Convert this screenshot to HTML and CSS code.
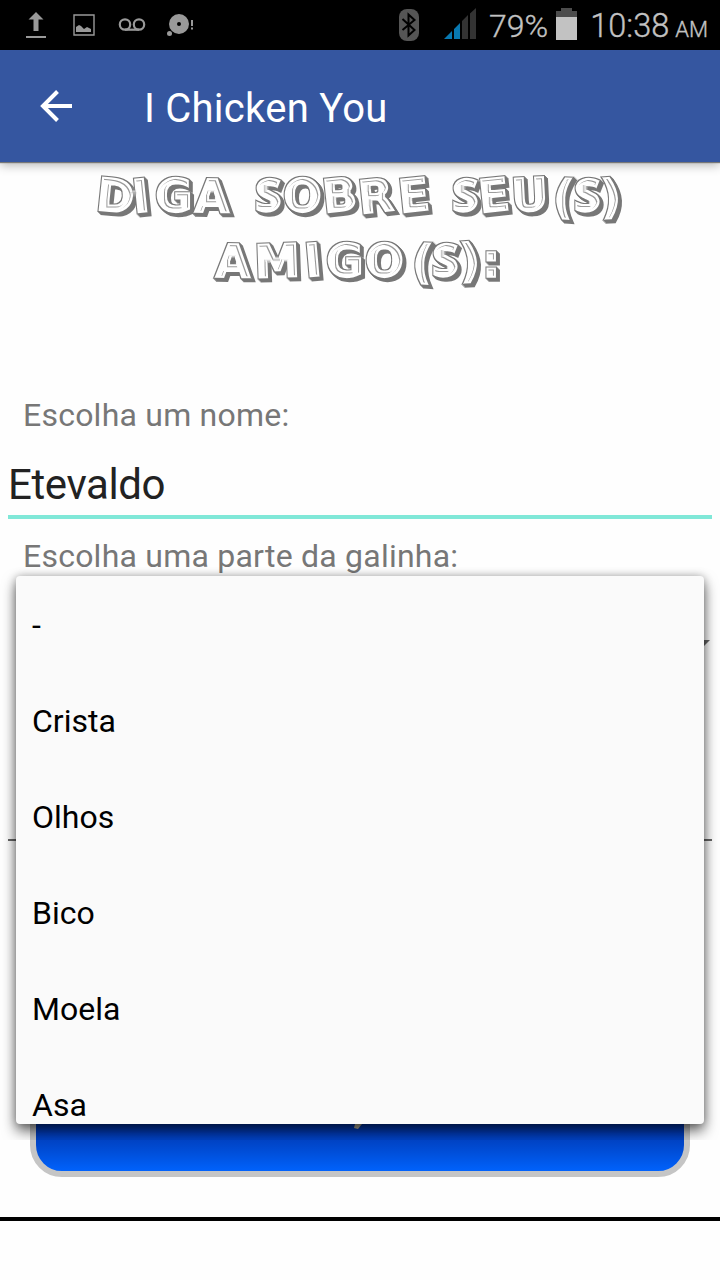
FILE: index.html
```
<!DOCTYPE html>
<html lang="pt-BR">
<head>
<meta charset="utf-8">
<meta name="viewport" content="width=720">
<title>I Chicken You</title>
<link rel="stylesheet" href="styles.css">
</head>
<body>
<div class="screen">
  <header class="status">
    <div class="notices">
      <svg class="upload" width="20" height="28" viewBox="0 0 20 28" fill="#999"><path d="M10 1l7.500 7.500h-5V20h-5V8.500h-5zM0 25h20v2H0z"/></svg>
      <svg class="picture" width="22" height="22" viewBox="0 0 22 22"><path d="M1 1h20v20H1z" fill="none" stroke="#999" stroke-width="1.400"/><path d="M3 18v-5l3-2 2 1 3 3 3-2 2 1 2 1v3z" fill="#999"/></svg>
      <svg class="voicemail" width="28" height="14" viewBox="0 0 28 14" fill="none" stroke="#999" stroke-width="2.200"><circle cx="7" cy="6.500" r="5.200"/><circle cx="21" cy="6.500" r="5.200"/><path d="M7 11.700h14"/></svg>
      <svg class="disc" width="28" height="24" viewBox="0 0 28 24" fill="#999"><path fill-rule="evenodd" d="M12 1a10 10 0 1 1 0 20 10 10 0 0 1 0-20zm0 8a2 2 0 1 0 0 4 2 2 0 0 0 0-4z"/><circle cx="2.500" cy="20.500" r="2.500"/><path d="M24 7h2v6h-2zM24 14.500h2v2h-2z"/></svg>
    </div>
    <div class="system">
      <svg class="bluetooth" width="22" height="34" viewBox="0 0 22 34"><rect x="1" y="1" width="20" height="32" rx="8" fill="#555"/><path d="M4.500 11l12 11-6 5.500V6.500l6 5.500-12 10" fill="none" stroke="#000" stroke-width="2"/></svg>
      <svg class="signal" width="32" height="32" viewBox="0 0 32 32"><path d="M0 31l8-8v8zM10 21l6-6v16h-6z" fill="#0878b0"/><path d="M18 13l6-6v24h-6zM26 5.500l6-5.500v31h-6z" fill="#333"/></svg>
      <span class="percent">79%</span>
      <svg class="battery" width="21" height="32" viewBox="0 0 21 32"><path d="M0 3h5V0h11v3h5v6H0z" fill="#4c4c4c"/><path d="M0 9h21v23H0z" fill="#c2c2c2"/></svg>
      <span class="clock">10:38</span><span class="meridiem">AM</span>
    </div>
  </header>
  <nav class="appbar">
    <svg class="back" width="32" height="32" viewBox="0 0 32 32" fill="none" stroke="#fff" stroke-width="4"><path d="M32 16H4M17.500 1.500L3 16l14.500 14.500"/></svg>
    <h1 class="title">I Chicken You</h1>
  </nav>
  <main class="content">
    <svg class="heading" width="720" height="140" viewBox="0 0 720 140">
      <defs>
        <filter id="carved" x="0" y="0" width="720" height="140" filterUnits="userSpaceOnUse" color-interpolation-filters="sRGB">
          <feFlood flood-color="#777" result="ink"/>
          <feFlood flood-color="#777" flood-opacity=".75" result="softInk"/>
          <feFlood flood-color="#fff" result="paper"/>
          <feMorphology in="SourceAlpha" operator="erode" radius="1" result="body"/>
          <feOffset in="SourceAlpha" dx="1" dy="1" result="s1"/>
          <feOffset in="SourceAlpha" dx="2" dy="2" result="s2"/>
          <feOffset in="SourceAlpha" dx="3" dy="3" result="s3"/>
          <feMerge result="solid"><feMergeNode in="s3"/><feMergeNode in="s2"/><feMergeNode in="s1"/><feMergeNode in="SourceAlpha"/></feMerge>
          <feComposite in="ink" in2="solid" operator="in" result="depth"/>
          <feComposite in="paper" in2="body" operator="in" result="face"/>
          <feMorphology in="SourceAlpha" operator="erode" radius="3" result="inner"/>
          <feOffset in="inner" dx="-1" dy="1" result="moved"/>
          <feComposite in="inner" in2="moved" operator="out" result="edge"/>
          <feComposite in="softInk" in2="edge" operator="in" result="line"/>
          <feMerge><feMergeNode in="depth"/><feMergeNode in="face"/><feMergeNode in="line"/></feMerge>
        </filter>
      </defs>
      <g filter="url(#carved)" class="carved">
        <text y="48 51 50 50 50 50 50 51 52 51 50 50 51 50 50 50 51" x="95 134 155 194 236 255 283 324 360 400 434 452 480 512 552 574 601" rotate="6 -6 0 1 0 0 0 -6 -6 -6 0 0 -6 -3 4 0 -3">DIGA <tspan class="narrow">S</tspan>OBRE <tspan class="narrow">S</tspan>EU(<tspan class="narrow">S</tspan>)</text>
        <text y="115 116 115 115 115 115 115 115 115" x="215 255 306 326 365 411 432 460 482" rotate="1 -2 -5 0 0 4 0 -3 0">AMIGO(<tspan class="narrow">S</tspan>):</text>
      </g>
    </svg>
    <label class="label name-label">Escolha um nome:</label>
    <div class="field">Etevaldo</div>
    <label class="label part-label">Escolha uma parte da galinha:</label>
    <div class="spinner"><svg width="20" height="10" viewBox="0 0 20 10"><path d="M0 0h20L10 10z" fill="#666"/></svg></div>
    <div class="empty-field"></div>
    <div class="button"><svg width="10" height="8" viewBox="0 0 10 8"><path d="M2 0h7L5 5 1 4z" fill="#b8b29a"/></svg></div>
    <div class="divider"></div>
  </main>
  <div class="shadow-area"><ul class="popup">
    <li class="option">-</li>
    <li class="option">Crista</li>
    <li class="option">Olhos</li>
    <li class="option">Bico</li>
    <li class="option">Moela</li>
    <li class="option">Asa</li>
  </ul></div>
</div>
</body>
</html>
```

FILE: styles.css
```
* { box-sizing: border-box; margin: 0; padding: 0; }
body { font-family: Roboto, "Noto Sans", sans-serif; background: #fff; }
svg { display: block; flex: none; }
.screen { position: relative; width: 720px; height: 1280px; overflow: hidden; display: flex; flex-direction: column; }
.status { height: 50px; background: #000; color: #c2c2c2; display: flex; justify-content: space-between; flex: none; }
.notices { display: flex; align-items: center; padding-left: 26px; }
.picture { margin-left: 27px; }
.voicemail { margin-left: 23px; }
.disc { margin-left: 21px; }
.system { display: flex; align-items: center; padding-right: 12px; white-space: nowrap; -webkit-text-stroke: .35px #c2c2c2; }
.signal { margin-left: 24px; margin-top: -2px; }
.percent { font-size: 32px; font-weight: 300; margin-left: 13px; padding-top: 2px; }
.battery { margin-left: 8px; margin-top: -2px; }
.clock { font-size: 32.500px; font-weight: 300; margin-left: 13px; padding-top: 2px; }
.meridiem { font-size: 22px; font-weight: 300; margin-left: 6px; padding-top: 9px; }
.appbar { height: 112px; flex: none; background: #3556a0; display: flex; align-items: center; padding-left: 40px; position: relative; box-shadow: 0 1px 1px #777, 0 3px 10px rgba(0,0,0,.3); z-index: 1; }
.title { font-size: 40px; line-height: 48px; font-weight: 400; color: #fff; margin-left: 72px; padding-top: 5px; letter-spacing: .25px; }
.content { display: flex; flex-direction: column; flex: 1; background: #fefefe; }
.heading { height: 140px; }
.carved text { font-family: "DejaVu Sans", sans-serif; font-size: 46px; font-weight: 700; stroke: #000; stroke-width: 3.4px; }
.carved .narrow { font-family: "Open Sans", sans-serif; font-size: 46px; font-weight: 800; }
.label { font-size: 32px; line-height: 38px; color: #777; padding-left: 23px; letter-spacing: .23px; }
.name-label { margin-top: 94px; }
.field { margin: 17px 8px 0; height: 68px; padding-top: 9px; font-size: 42px; line-height: 50px; letter-spacing: -.4px; color: #222; border-bottom: 4px solid #80e8d8; }
.part-label { margin-top: 18px; }
.spinner { height: 104px; padding: 65px 10px 0 0; display: flex; justify-content: flex-end; }
.empty-field { margin: 0 8px; height: 162px; border-bottom: 2px solid #666; }
.button { margin: 209px 30px 0; height: 127px; border: 6px solid #c5c5c5; border-radius: 32px; background: linear-gradient(#000038, #003cb8 68%, #0062fc); display: flex; justify-content: center; padding: 68px 5px 0 0; }
.divider { margin-top: 40px; height: 4px; background: #000; }
.shadow-area { position: absolute; left: 0; top: 560px; width: 720px; height: 580px; overflow: hidden; padding: 16px 16px 0; }
.popup { height: 548px; overflow: hidden; list-style: none; border-radius: 4px; background: #fafafa; box-shadow: 0 7px 14px rgba(0,0,0,.6), 0 0 8px rgba(0,0,0,.25); }
.option { height: 96px; font-size: 32px; line-height: 98px; padding: 0 16px; color: #000; }
```
